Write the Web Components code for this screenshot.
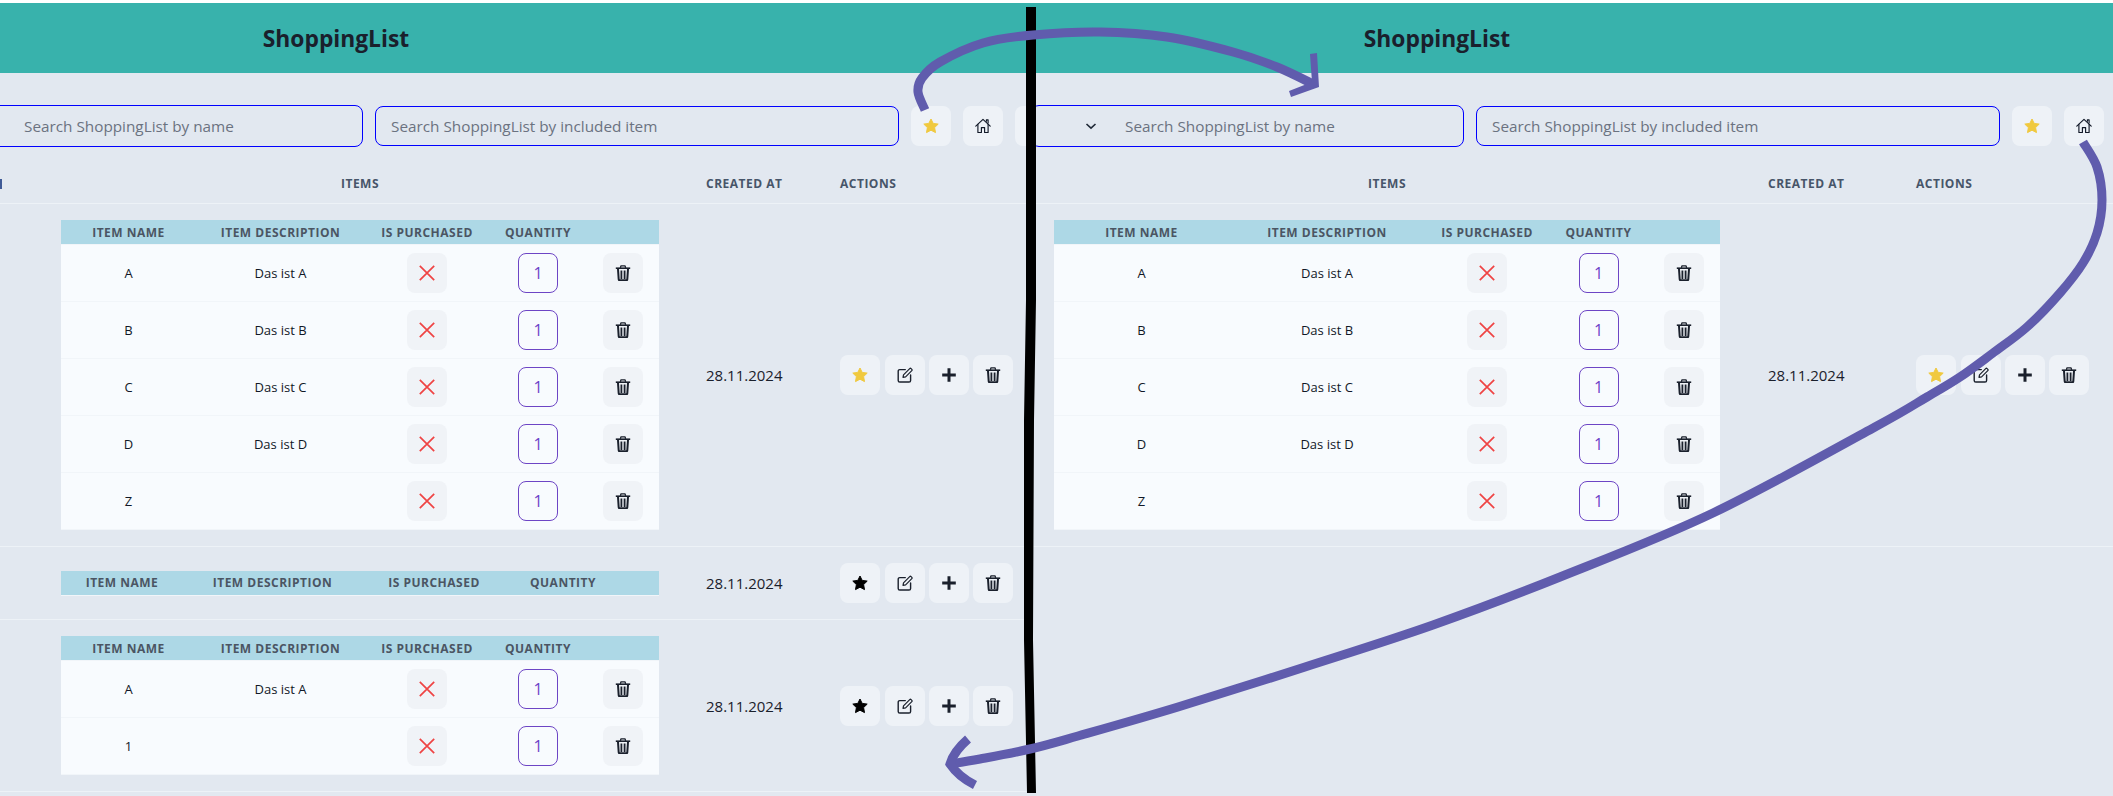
<!DOCTYPE html>
<html lang="en">
<head>
<meta charset="utf-8">
<title>ShoppingList</title>
<style>
    html, body {
        margin: 0;
        height: 100%;
        background: #fff;
        overflow: hidden;
    }

    body {
        font-family: "Open Sans", "Noto Sans", sans-serif;
        color: #1f2937;
    }
</style>
</head>
<body>

<shopping-board>
    <shopping-panel style="--shift: -70px; --list-cols: 115px 645px 134px 1fr; --table-width: 598px; --item-cols: 135px 169px 124px 98px 72px;">
        <search-field slot="search" wide chevron>Search ShoppingList by name</search-field>
        <search-field slot="search" style="width: 524px;">Search ShoppingList by included item</search-field>
        <icon-button slot="search" icon="star" tone="gold"></icon-button>
        <icon-button slot="search" icon="home"></icon-button>
        <icon-button slot="search"></icon-button>

        <list-row head stub>
            <span slot="items">ITEMS</span>
            <span slot="date">CREATED AT</span>
            <span slot="actions">ACTIONS</span>
        </list-row>

        <list-row favourite>
            <item-table slot="items">
                <item-row><span slot="name">A</span><span slot="desc">Das ist A</span></item-row>
                <item-row><span slot="name">B</span><span slot="desc">Das ist B</span></item-row>
                <item-row><span slot="name">C</span><span slot="desc">Das ist C</span></item-row>
                <item-row><span slot="name">D</span><span slot="desc">Das ist D</span></item-row>
                <item-row><span slot="name">Z</span></item-row>
            </item-table>
            <span slot="date">28.11.2024</span>
        </list-row>

        <list-row>
            <item-table slot="items" style="--item-cols: 122px 179px 144px 114px 39px;"></item-table>
            <span slot="date">28.11.2024</span>
        </list-row>

        <list-row>
            <item-table slot="items">
                <item-row><span slot="name">A</span><span slot="desc">Das ist A</span></item-row>
                <item-row><span slot="name">1</span></item-row>
            </item-table>
            <span slot="date">28.11.2024</span>
        </list-row>
    </shopping-panel>

    <shopping-panel style="--shift: 0px; --list-cols: 7px 714px 148px 1fr; --table-width: 666px; --item-cols: 175px 196px 124px 99px 72px;">
        <search-field slot="search" wide chevron>Search ShoppingList by name</search-field>
        <search-field slot="search" style="width: 524px;">Search ShoppingList by included item</search-field>
        <icon-button slot="search" icon="star" tone="gold"></icon-button>
        <icon-button slot="search" icon="home"></icon-button>

        <list-row head>
            <span slot="items">ITEMS</span>
            <span slot="date">CREATED AT</span>
            <span slot="actions">ACTIONS</span>
        </list-row>

        <list-row favourite>
            <item-table slot="items">
                <item-row><span slot="name">A</span><span slot="desc">Das ist A</span></item-row>
                <item-row><span slot="name">B</span><span slot="desc">Das ist B</span></item-row>
                <item-row><span slot="name">C</span><span slot="desc">Das ist C</span></item-row>
                <item-row><span slot="name">D</span><span slot="desc">Das ist D</span></item-row>
                <item-row><span slot="name">Z</span></item-row>
            </item-table>
            <span slot="date">28.11.2024</span>
        </list-row>
    </shopping-panel>

    <ink-overlay></ink-overlay>
</shopping-board>

<script>
var ICONS = {
    star: `<polygon points="8,1 10.2,5.4 15.2,6.1 11.6,9.6 12.5,14.6 8,12.2 3.5,14.6 4.4,9.6 .8,6.1 5.8,5.4" fill="currentColor" stroke="currentColor" stroke-width="1" stroke-linejoin="round"/>`,
    home: `<g fill="none" stroke="currentColor" stroke-width="1.15" stroke-linejoin="round" stroke-linecap="round"><path d="M0.8 8.2 8 1.4l7.2 6.8"/><path d="M11.4 3.2V1.8h1.7v3.2"/><path d="M2.9 6.4v8.1h3.5V9.6h3.2v4.9h3.5V6.4"/></g>`,
    edit: `<g fill="none" stroke="currentColor" stroke-linecap="round" stroke-linejoin="round"><path d="M8.3 2.6H2.8A1.6 1.6 0 0 0 1.2 4.2v9.2A1.6 1.6 0 0 0 2.8 15h9.2a1.6 1.6 0 0 0 1.6-1.6V8" stroke-width="1.4"/><path d="M6 10.4l.5-2.6 6.2-6.2a1 1 0 0 1 1.4 0l.7.7a1 1 0 0 1 0 1.4L8.6 9.9z" stroke-width="1.2"/></g>`,
    plus: `<path d="M8 1.2v13.6M1.2 8h13.6" fill="none" stroke="currentColor" stroke-width="3"/>`,
    trash: `<g fill="none" stroke="currentColor" stroke-linejoin="round"><path d="M5.4 2.8 5.9 .8h4.2l.5 2" stroke-width="1.3"/><path d="M.8 3.2h14.4" stroke-width="1.6"/><path d="M3 4l.7 10.3a1 1 0 0 0 1 1h6.6a1 1 0 0 0 1-1L13 4" stroke-width="2"/><path d="M6.4 5.5v8.5M9.6 5.5v8.5" stroke-width="1.8"/></g>`,
    cross: `<path d="M.8 .8l14.4 14.4M15.200 .8 .8 15.200" fill="none" stroke="currentColor" stroke-width="1.7"/>`
}

var templateBoard = document.createElement('template')
templateBoard.innerHTML = `
<style>
    :host {
        display: flex;
        position: relative;
        width: 2113px;
        height: 796px;
        padding-top: 3px;
        box-sizing: border-box;
    }

    ::slotted(shopping-panel:first-child) {
        flex: 0 0 1031px;
    }
</style>
<slot></slot>
`

class ShoppingBoard extends HTMLElement {
    constructor() {
        super()
        this.attachShadow({ mode: "open" }).appendChild(templateBoard.content.cloneNode(true))
    }
}

var templatePanel = document.createElement('template')
templatePanel.innerHTML = `
<style>
    :host {
        display: block;
        flex: 1;
        min-width: 0;
        background: #e2e8f0;
        overflow: hidden;
    }

    #inner {
        width: 1101px;
        margin-left: var(--shift);
    }

    header {
        height: 70px;
        padding-right: 289px;
        display: flex;
        align-items: center;
        justify-content: center;
        background: #38b2ac;
        font-size: 22.8px;
        font-weight: 700;
        color: #1a202c;
    }

    #search {
        display: flex;
        align-items: center;
        gap: 12px;
        margin-top: 32px;
        height: 42px;
    }
</style>
<div id="inner">
    <header>ShoppingList</header>
    <div id="search"><slot name="search"></slot></div>
    <slot></slot>
</div>
`

class ShoppingPanel extends HTMLElement {
    constructor() {
        super()
        this.attachShadow({ mode: "open" }).appendChild(templatePanel.content.cloneNode(true))
    }
}

var templateSearch = document.createElement('template')
templateSearch.innerHTML = `
<style>
    :host {
        display: flex;
        align-items: center;
        flex: none;
        box-sizing: border-box;
        height: 40px;
        padding-left: 15px;
        border: 1px solid #0000ff;
        border-radius: 8px;
        font-size: 15.3px;
        color: #6b7280;
    }

    :host([wide]) {
        width: 433px;
        height: 42px;
        padding-left: 93px;
        position: relative;
    }

    svg {
        position: absolute;
        left: 53px;
        top: 14px;
    }
</style>
<span id="chevron"></span>
<slot></slot>
`

class SearchField extends HTMLElement {
    constructor() {
        super()
        this.attachShadow({ mode: "open" }).appendChild(templateSearch.content.cloneNode(true))
    }

    connectedCallback() {
        if (this.hasAttribute('chevron')) {
            this.shadowRoot.getElementById('chevron').innerHTML =
                `<svg width="12" height="12" viewBox="0 0 12 12"><path d="M1.5 4l4.500 4.200L10.500 4" fill="none" stroke="#1f2937" stroke-width="1.6"/></svg>`
        }
    }
}

var templateButton = document.createElement('template')
templateButton.innerHTML = `
<style>
    :host {
        display: inline-flex;
        align-items: center;
        justify-content: center;
        flex: none;
        width: 40px;
        height: 40px;
        border-radius: 8px;
        background: #eef2f7;
        color: #1a202c;
    }

    :host([tone="gold"]) { color: #f0c93f; }
    :host([tone="black"]) { color: #000; }
    :host([tone="red"]) { color: #ef4444; }
    :host([icon="home"]) { color: #111827; }
</style>
<svg width="16" height="16" viewBox="0 0 16 16"></svg>
`

class IconButton extends HTMLElement {
    constructor() {
        super()
        this.attachShadow({ mode: "open" }).appendChild(templateButton.content.cloneNode(true))
    }

    connectedCallback() {
        this.shadowRoot.querySelector('svg').innerHTML = ICONS[this.getAttribute('icon')] || ''
    }
}

var templateListRow = document.createElement('template')
templateListRow.innerHTML = `
<style>
    :host {
        display: grid;
        grid-template-columns: var(--list-cols);
        align-items: center;
        padding: 16px 0;
        min-height: 40px;
        border-bottom: 1px solid #edf2f7;
        font-size: 15px;
        color: #1a202c;
    }

    :host([head]) {
        align-items: end;
        min-height: 0;
        height: 56px;
        padding: 0;
        font-size: 12px;
        font-weight: 700;
        letter-spacing: .5px;
        line-height: 16px;
        color: #475569;
    }

    :host([head]) > div {
        padding-bottom: 11px;
    }

    /* the last stroke of a cut off column title, at the very edge of the left panel */
    :host([stub]) #first::after {
        content: "";
        position: absolute;
        left: 70px;
        bottom: 14px;
        width: 2px;
        height: 10px;
        background: #3f5a96;
    }

    #first { position: relative; height: 100%; }
    #items { padding-left: 16px; }
    #date { padding-left: 16px; }
    #actions { padding-left: 16px; display: flex; }
    :host([head]) #items { text-align: center; width: var(--table-width); }
    #buttons { display: flex; }
    icon-button:nth-child(2) { margin-left: 5px; }
    icon-button:nth-child(3), icon-button:nth-child(4) { margin-left: 4px; }
</style>
<div id="first"></div>
<div id="items"><slot name="items"></slot></div>
<div id="date"><slot name="date"></slot></div>
<div id="actions"><slot name="actions"><div id="buttons"></div></slot></div>
`

class ListRow extends HTMLElement {
    constructor() {
        super()
        this.attachShadow({ mode: "open" }).appendChild(templateListRow.content.cloneNode(true))
    }

    connectedCallback() {
        if (this.hasAttribute('head')) return
        var starTone = this.hasAttribute('favourite') ? 'gold' : 'black'
        this.shadowRoot.getElementById('buttons').innerHTML = `
            <icon-button icon="star" tone="${starTone}"></icon-button>
            <icon-button icon="edit"></icon-button>
            <icon-button icon="plus"></icon-button>
            <icon-button icon="trash"></icon-button>
        `
    }
}

var templateTable = document.createElement('template')
templateTable.innerHTML = `
<style>
    :host {
        display: block;
        width: var(--table-width);
        background: #f8fbfe;
    }

    #head {
        display: grid;
        grid-template-columns: var(--item-cols);
        height: 24px;
        border-bottom: 1px solid #f1f5f9;
        align-items: center;
        text-align: center;
        background: #add8e6;
        font-size: 12px;
        font-weight: 700;
        letter-spacing: .5px;
        color: #4b5563;
    }
</style>
<div id="head">
    <span>ITEM NAME</span>
    <span>ITEM DESCRIPTION</span>
    <span>IS PURCHASED</span>
    <span>QUANTITY</span>
</div>
<slot></slot>
`

class ItemTable extends HTMLElement {
    constructor() {
        super()
        this.attachShadow({ mode: "open" }).appendChild(templateTable.content.cloneNode(true))
    }
}

var templateItemRow = document.createElement('template')
templateItemRow.innerHTML = `
<style>
    :host {
        display: grid;
        grid-template-columns: var(--item-cols);
        align-items: center;
        justify-items: center;
        height: 56px;
        border-bottom: 1px solid #f1f5f9;
        font-size: 13px;
        color: #111827;
    }

    #qty {
        box-sizing: border-box;
        width: 40px;
        height: 40px;
        display: flex;
        align-items: center;
        justify-content: center;
        border: 1px solid #6d45c5;
        border-radius: 8px;
        font-size: 16px;
        color: #6d3fc8;
    }

    icon-button {
        background: #f0f3f7;
    }
</style>
<div><slot name="name"></slot></div>
<div><slot name="desc"></slot></div>
<icon-button icon="cross" tone="red"></icon-button>
<div id="qty">1</div>
<icon-button icon="trash"></icon-button>
`

class ItemRow extends HTMLElement {
    constructor() {
        super()
        this.attachShadow({ mode: "open" }).appendChild(templateItemRow.content.cloneNode(true))
    }
}

// hand drawn strokes are given as points, the curve runs through them
var smoothPath = (points) => {
    var d = `M${points[0][0]} ${points[0][1]}`
    for (var i = 0; i < points.length - 1; i++) {
        var p0 = points[i - 1] || points[i]
        var p1 = points[i]
        var p2 = points[i + 1]
        var p3 = points[i + 2] || p2
        var c1x = p1[0] + (p2[0] - p0[0]) / 6
        var c1y = p1[1] + (p2[1] - p0[1]) / 6
        var c2x = p2[0] - (p3[0] - p1[0]) / 6
        var c2y = p2[1] - (p3[1] - p1[1]) / 6
        d += `C${c1x.toFixed(1)} ${c1y.toFixed(1)} ${c2x.toFixed(1)} ${c2y.toFixed(1)} ${p2[0]} ${p2[1]}`
    }
    return d
}

var templateInk = document.createElement('template')
templateInk.innerHTML = `
<style>
    :host {
        position: absolute;
        left: 0;
        top: 0;
        width: 2113px;
        height: 796px;
        pointer-events: none;
    }
</style>
<svg width="2113" height="796" viewBox="0 0 2113 796">
    <polygon fill="#000" points="1026,7 1036,7 1036,300 1034,420 1033,640 1036,793 1027,793 1024,640 1024,420 1026,300"/>
    <g fill="none" stroke="#605cad" stroke-width="9">
        <path id="over"/>
        <polygon fill="#605cad" stroke="none" points="1310,54 1317,53 1319,87 1291,97 1289,91 1312,82"/>
        <path id="under"/>
        <path d="M968 739C960 746 953 754 950 764C956 773 965 780 975 785"/>
    </g>
</svg>
`

class InkOverlay extends HTMLElement {
    constructor() {
        super()
        this.attachShadow({ mode: "open" }).appendChild(templateInk.content.cloneNode(true))
    }

    connectedCallback() {
        this.shadowRoot.getElementById('over').setAttribute('d', smoothPath([
            [925, 110], [918, 92], [922, 78], [940, 62], [983, 43], [1033, 35], [1100, 32], [1167, 37], [1233, 52], [1277, 67], [1315, 85]
        ]))
        this.shadowRoot.getElementById('under').setAttribute('d', smoothPath([
            [2083, 142], [2097, 167], [2102, 200], [2097, 233], [2083, 263], [2060, 293], [2027, 327], [1993, 353], [1960, 377], [1927, 397], [1875, 427],
            [1713, 513], [1560, 577], [1433, 625], [1305, 667], [1178, 707], [1078, 736], [1030, 749], [980, 759], [950, 764]
        ]))
    }
}

window.customElements.define('icon-button', IconButton)
window.customElements.define('search-field', SearchField)
window.customElements.define('item-row', ItemRow)
window.customElements.define('item-table', ItemTable)
window.customElements.define('list-row', ListRow)
window.customElements.define('shopping-panel', ShoppingPanel)
window.customElements.define('shopping-board', ShoppingBoard)
window.customElements.define('ink-overlay', InkOverlay)
</script>
</body>
</html>
